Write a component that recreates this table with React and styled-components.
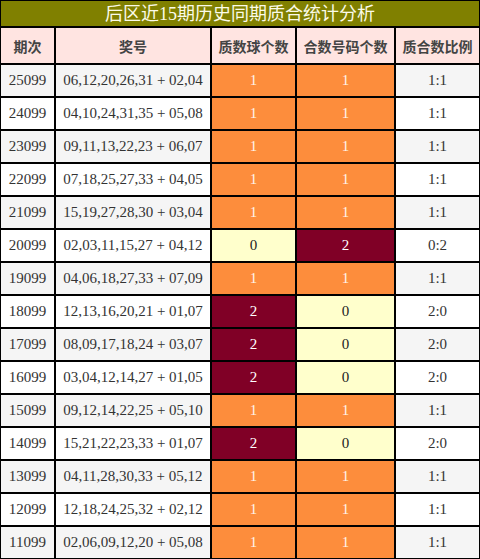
import React from "react";
import styled, { createGlobalStyle } from "styled-components";

const Global = createGlobalStyle`
  html, body { margin: 0; padding: 0; background: #fff; }
  body { font-family: "Liberation Serif", "Noto Sans CJK SC", serif; }
`;

const COLS = "55px 156px 85px 99px 85px";

const Table = styled.div`
  width: 480px;
  display: grid;
  grid-template-columns: ${COLS};
  box-sizing: border-box;
`;

const Title = styled.div`
  grid-column: 1 / -1;
  height: 27px;
  box-sizing: border-box;
  border: 1px solid #000;
  background: #808000;
  color: #fbfbe8;
  font-family: "Liberation Serif", "Noto Sans CJK SC", serif;
  font-size: 18px;
  display: flex;
  align-items: center;
  justify-content: center;
  line-height: 1;
`;

const Head = styled.div`
  height: 37px;
  box-sizing: border-box;
  border: 1px solid #000;
  background: #ffe4e1;
  color: #444;
  font-family: "Noto Sans CJK SC", sans-serif;
  font-weight: bold;
  font-size: 14px;
  display: flex;
  align-items: center;
  justify-content: center;
`;

const Cell = styled.div`
  height: 33px;
  box-sizing: border-box;
  border: 1px solid #000;
  background: ${(p) => p.$bg};
  color: ${(p) => p.$fg || "#333"};
  font-family: "Liberation Serif", serif;
  font-size: 15px;
  display: flex;
  align-items: center;
  justify-content: center;
  white-space: nowrap;
`;

const heat = {
  0: { bg: "#ffffcc", fg: "#222" },
  1: { bg: "#fd8d3c", fg: "#fff4ea" },
  2: { bg: "#800026", fg: "#fff" },
};

const rows = [
  ["25099", "06,12,20,26,31 + 02,04", 1, 1],
  ["24099", "04,10,24,31,35 + 05,08", 1, 1],
  ["23099", "09,11,13,22,23 + 06,07", 1, 1],
  ["22099", "07,18,25,27,33 + 04,05", 1, 1],
  ["21099", "15,19,27,28,30 + 03,04", 1, 1],
  ["20099", "02,03,11,15,27 + 04,12", 0, 2],
  ["19099", "04,06,18,27,33 + 07,09", 1, 1],
  ["18099", "12,13,16,20,21 + 01,07", 2, 0],
  ["17099", "08,09,17,18,24 + 03,07", 2, 0],
  ["16099", "03,04,12,14,27 + 01,05", 2, 0],
  ["15099", "09,12,14,22,25 + 05,10", 1, 1],
  ["14099", "15,21,22,23,33 + 01,07", 2, 0],
  ["13099", "04,11,28,30,33 + 05,12", 1, 1],
  ["12099", "12,18,24,25,32 + 02,12", 1, 1],
  ["11099", "02,06,09,12,20 + 05,08", 1, 1],
];

const headers = ["期次", "奖号", "质数球个数", "合数号码个数", "质合数比例"];

export default function App() {
  return (
    <>
      <Global />
      <Table>
        <Title>后区近15期历史同期质合统计分析</Title>
        {headers.map((h) => (
          <Head key={h}>{h}</Head>
        ))}
        {rows.map(([p, n, a, b], i) => {
          const bg = i % 2 === 0 ? "#f5f5f5" : "#ffffff";
          return (
            <React.Fragment key={p}>
              <Cell $bg={bg}>{p}</Cell>
              <Cell $bg={bg}>{n}</Cell>
              <Cell $bg={heat[a].bg} $fg={heat[a].fg}>{a}</Cell>
              <Cell $bg={heat[b].bg} $fg={heat[b].fg}>{b}</Cell>
              <Cell $bg={bg}>{`${a}:${b}`}</Cell>
            </React.Fragment>
          );
        })}
      </Table>
    </>
  );
}
